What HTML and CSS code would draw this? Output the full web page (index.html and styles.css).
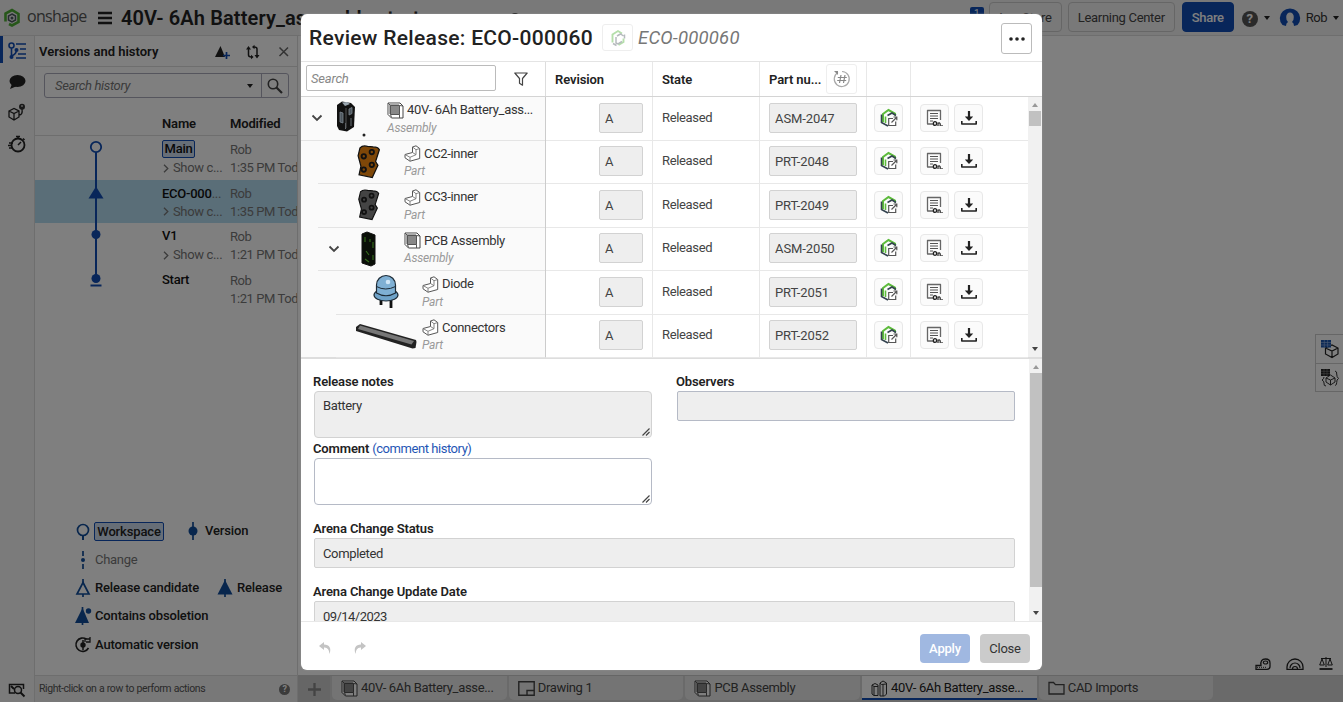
FILE: index.html
```html
<!DOCTYPE html>
<html lang="en">
<head>
<meta charset="utf-8">
<title>Review Release</title>
<link rel="stylesheet" href="styles.css">
</head>
<body>
<svg class="defs" width="0" height="0">
  <symbol id="asm" viewBox="0 0 17 17"><path d="M1 1h12l3 3v12H4.500L1 12.500z" fill="#fff" stroke="#444"/><path d="M1 1h11v11H1z" fill="#aaa"/><path d="M3.500 3.500h9v9h-9z" fill="#888" stroke="#555"/><path d="M12.500 3.500L16 4M3.500 12.500l1 3M12.500 12.500v3.500M1 1l2.500 2.500" stroke="#555" fill="none"/></symbol>
  <symbol id="part" viewBox="0 0 17 17"><path d="M8.500 2L12 .8l3.700 2.700v10L6 16.200 1 12.800V9.500l7.500-2z" fill="#fff" stroke="#555" stroke-linejoin="round"/><path d="M8.500 2L12 4.700l3.700-1.200M12 4.700v5L6 12.300 1 9.500M6 12.300v3.900M8.500 7.500l3.500 2.200" stroke="#777" stroke-width=".9" fill="none"/></symbol>
  <symbol id="open" viewBox="0 0 18 20"><path d="M3 14V6l5.500-4L15 5.500v2" fill="none" stroke="#5dbb3c" stroke-width="2"/><path d="M7.500 7.500L12 5l4 2.500M1.500 6.500v8L8 18" fill="none" stroke="#33434f" stroke-width="1.600"/><path d="M5.500 15V8.500" stroke="#5dbb3c" stroke-width="1.600"/><path d="M13 10.500H8.700v7h7v-4" fill="#fff" stroke="#555" stroke-width="1.200"/><path d="M11.500 14.500l5-5M13.500 9h3.300v3.300" fill="none" stroke="#555" stroke-width="1.200"/></symbol>
  <symbol id="doc" viewBox="0 0 18 18"><path d="M8 15H2.500V1.500h13V11" fill="none" stroke="#666" stroke-width="1.300" stroke-linejoin="round"/><path d="M5 4.500h8M5 7h8M5 9.500h8M5 12h3" stroke="#555"/><ellipse cx="10" cy="14.500" rx="1.600" ry="1.900" fill="none" stroke="#222" stroke-width="1.400"/><path d="M13 17v-3.500M13 14.300q2.200-1 2.200 1V17M17 16v1" stroke="#222" stroke-width="1.200" fill="none"/></symbol>
  <symbol id="down" viewBox="0 0 16 16"><path d="M8 1v8" stroke="#222" stroke-width="2.200"/><path d="M3.800 6.500h8.400L8 11z" fill="#222"/><path d="M.8 11v3h14.400v-3" fill="none" stroke="#222" stroke-width="1.600" stroke-linejoin="round"/></symbol>
  <symbol id="chev" viewBox="0 0 12 8"><path d="M1.500 1.500L6 6l4.500-4.500" fill="none" stroke="#444" stroke-width="1.800"/></symbol>
  <symbol id="more" viewBox="0 0 6 9"><path d="M1 .7L4.800 4.500 1 8.300" fill="none" stroke="#777" stroke-width="1.300"/></symbol>
  <symbol id="grip" viewBox="0 0 8 8"><path d="M.5 7.500l7-7M4 7.500L7.500 4" stroke="#444" stroke-width="1.200"/></symbol>
  <symbol id="plate" viewBox="0 0 26 36"><path d="M4 3q3-3 8-1.500L18 2q5 0 6.500 3l-4 12.500 2.500 4L17 34.500 3 31.500l2-9-3-11z" stroke="#111" stroke-width="1.300"/><g fill="none" stroke="#111" stroke-width="2"><circle cx="8" cy="12" r="2.300"/><circle cx="16.500" cy="7.500" r="2.300"/><circle cx="16.500" cy="21" r="2.300"/><circle cx="8" cy="26" r="2.300"/></g></symbol>
</svg>

<div class="app">
  <header class="topbar">
    <svg class="logo" width="18" height="20" viewBox="0 0 18 20"><path d="M2.500 13.500V5.500L9 2l6.500 4v8L9 17.500 6 16" fill="none" stroke="#4fae35" stroke-width="2.600"/><path d="M9 6l3.500 2v4L9 14l-3.500-2V8z" fill="none" stroke="#4d5a60" stroke-width="1.500"/><circle cx="9" cy="10" r="1.500" fill="#4d5a60"/></svg>
    <span class="brand">onshape</span>
    <svg class="burger" width="14" height="14" viewBox="0 0 14 14"><path d="M0 2h14M0 7h14M0 12h14" stroke="#222" stroke-width="2.400"/></svg>
    <span class="doc-title">40V- 6Ah Battery_assembly start</span>
    <svg class="peek-link" width="8" height="10" viewBox="0 0 8 10"><circle cx="4" cy="4" r="3" fill="none" stroke="#222" stroke-width="2"/></svg>
    <div class="peeks">
      <svg width="50" height="14" viewBox="0 0 50 14"><circle cx="5" cy="7" r="3" fill="#222"/><path d="M38 4q-4 4 0 8M46 4q4 4 0 8" fill="none" stroke="#222" stroke-width="2"/></svg>
      <span class="badge">1</span>
    </div>
    <span class="hbtn store">App Store</span>
    <span class="hbtn learn">Learning Center</span>
    <span class="hbtn share">Share</span>
    <span class="help">?</span>
    <i class="caret"></i>
    <svg class="avatar" width="22" height="20" viewBox="0 0 22 20"><path d="M3.500 17A10.200 9.800 0 1 1 18.500 17L15 18q0-3-2-4 2-2 1.800-5A3.800 4.500 0 0 0 7.200 9q-.2 3 1.800 5-2 1-2 4z" fill="#114db4"/></svg>
    <span class="user">Rob</span>
    <i class="caret last"></i>
  </header>

  <div class="workspace">
    <nav class="rail">
      <div class="rail-on"><svg width="18" height="18" viewBox="0 0 18 18"><g fill="none" stroke="#114db4" stroke-width="1.600"><circle cx="3.500" cy="3.500" r="2.500"/><path d="M3.500 6v10M3.500 14Q8.500 12 8.500 8"/><path d="M8 2h10M12 7h6M10 12h8M8 16h10"/></g><g fill="#114db4"><circle cx="3.500" cy="15" r="2"/><circle cx="8.500" cy="8" r="2"/></g></svg></div>
      <svg width="18" height="16" viewBox="0 0 18 16"><ellipse cx="9.500" cy="7" rx="8" ry="6" fill="#222"/><path d="M4 10l-2 5 7-3z" fill="#222"/></svg>
      <svg width="18" height="18" viewBox="0 0 18 18"><path d="M1 8l5-2.500L11 8v6l-5 3-5-3zM1 8l5 2.500L11 8M6 10.500V17M11 12q4 0 3-6" fill="none" stroke="#222" stroke-width="1.300"/><circle cx="14" cy="3.800" r="3" fill="#333"/><path d="M14 2v2" stroke="#fff"/></svg>
      <svg width="18" height="18" viewBox="0 0 18 18"><circle cx="10" cy="10" r="6.500" fill="none" stroke="#222" stroke-width="1.800"/><path d="M8 1.500h4M10 1.500V4M15 3.500l1.500 1.500M10 10l3-3M1 8h4M0 10.500h4M1 13h4" stroke="#222" stroke-width="1.500"/></svg>
      <svg class="rail-last" width="18" height="15" viewBox="0 0 18 15"><path d="M7 11H1.500V2.500h14V7" fill="none" stroke="#222" stroke-width="1.500"/><circle cx="10" cy="8" r="3.500" fill="#eee" stroke="#222" stroke-width="1.500"/><path d="M12.500 10.500l4 4M3 4l3 3" stroke="#222" stroke-width="2"/></svg>
    </nav>

    <aside class="panel">
      <div class="panel-head">
        <b>Versions and history</b>
        <svg width="70" height="16" viewBox="0 0 70 16"><path d="M0 13L5.500 2 10 13z" fill="#222"/><path d="M8 11.500h7M11.500 8v7" stroke="#114db4" stroke-width="1.700"/><g fill="none" stroke="#222" stroke-width="1.500"><path d="M33.500 4v7q0 2 3 2M39 3q3 0 3 2v8"/></g><path d="M31 5.500h5L33.500 2zM39.500 11h5L42 14.500zM36 10.800v4.400l2.600-2.200zM39.500.8v4.400L37 3z" fill="#222"/><path d="M64.500 3.500l8.500 8.500M73 3.500L64.500 12" stroke="#666" stroke-width="1.500"/></svg>
      </div>
      <div class="history-search"><i>Search history</i><em class="caret"></em><span class="mag"><svg width="16" height="16" viewBox="0 0 16 16"><circle cx="6" cy="6" r="4.700" fill="none" stroke="#444" stroke-width="1.600"/><path d="M9.500 9.500L15 15" stroke="#444" stroke-width="2.200"/></svg></span></div>
      <div class="hist-cols"><b>Name</b><b>Modified</b></div>
      <div class="history">
        <svg class="graph" width="24" height="152" viewBox="0 0 24 152"><path d="M12 15v130" stroke="#114db4" stroke-width="2"/><circle cx="12" cy="11" r="5.200" fill="#fff" stroke="#114db4" stroke-width="1.800"/><path d="M12 50.500l7.500 12h-15z" fill="#114db4"/><circle cx="12" cy="98.500" r="4.500" fill="#114db4"/><circle cx="12" cy="142.500" r="4.500" fill="#114db4"/><path d="M6.500 149.500h11" stroke="#114db4" stroke-width="2"/></svg>
        <div class="hrow"><div><b class="tagbox">Main</b><small><svg width="6" height="9"><use href="#more"/></svg>Show c...</small></div><div><span>Rob</span><small>1:35 PM Tod</small></div></div>
        <div class="hrow sel"><div><b>ECO-000<span class="dots">...</span></b><small><svg width="6" height="9"><use href="#more"/></svg>Show c...</small></div><div><span>Rob</span><small>1:35 PM Tod</small></div></div>
        <div class="hrow"><div><b>V1</b><small><svg width="6" height="9"><use href="#more"/></svg>Show c...</small></div><div><span>Rob</span><small>1:21 PM Tod</small></div></div>
        <div class="hrow"><div><b>Start</b></div><div><span>Rob</span><small>1:21 PM Tod</small></div></div>
      </div>
      <div class="legend">
        <div><svg width="16" height="18" viewBox="0 0 16 18"><circle cx="8" cy="8" r="5.500" fill="none" stroke="#114d9b" stroke-width="1.700"/><path d="M8 13.500V18" stroke="#114d9b" stroke-width="2"/></svg><span class="tagbox">Workspace</span><svg class="second" width="16" height="18" viewBox="0 0 16 18"><circle cx="8" cy="9" r="4.500" fill="#114d9b"/><path d="M8 0v18" stroke="#114d9b" stroke-width="1.700"/></svg><span>Version</span></div>
        <div><svg width="16" height="18" viewBox="0 0 16 18"><path d="M8 0v5M8 13v5" stroke="#114d9b" stroke-width="1.700"/><circle cx="8" cy="9" r="2" fill="#114d9b"/></svg><span class="mute">Change</span></div>
        <div><svg width="16" height="18" viewBox="0 0 16 18"><path d="M8 3.500L14 15H2z" fill="none" stroke="#114d9b" stroke-width="1.700"/><path d="M8 0v4M8 15v3" stroke="#114d9b" stroke-width="1.700"/></svg><span class="rc">Release candidate</span><svg class="third" width="16" height="18" viewBox="0 0 16 18"><path d="M8 1l7.500 14.500H.5z" fill="#114d9b"/><path d="M8 0v18" stroke="#114d9b" stroke-width="1.700"/></svg><span>Release</span></div>
        <div><svg width="16" height="18" viewBox="0 0 16 18"><path d="M7.500 1L14 16H0z" fill="#114d9b"/><path d="M7.500 0v18" stroke="#114d9b" stroke-width="1.700"/><circle cx="13.500" cy="4" r="2.700" fill="#114d9b"/></svg><span>Contains obsoletion</span></div>
        <div><svg width="16" height="18" viewBox="0 0 16 18"><path d="M11.500 3.200A6.700 6.700 0 1 0 13.500 12" fill="none" stroke="#222" stroke-width="1.600"/><path d="M10 6V3h5M15 1v5h-4" fill="none" stroke="#222" stroke-width="1.300"/><circle cx="8" cy="9" r="2.700" fill="#222"/><path d="M8 4v10" stroke="#222" stroke-width="1.500"/></svg><span>Automatic version</span></div>
      </div>
      <div class="panel-foot"><span>Right-click on a row to perform actions</span><span class="help small">?</span></div>
    </aside>

    <main class="canvas">
      <div class="side-tools">
        <span><svg width="18" height="18" viewBox="0 0 18 18"><path d="M4.500 8l6.500-3 6 3v6l-6 3.500-6.500-3.500zM4.500 8l6.500 3 6-3M11 11v6.500" fill="none" stroke="#222" stroke-width="1.200"/><path d="M0 0h10v7.500H0z" fill="#1b55ad"/><path d="M3.300 0v7.500M6.600 0v7.500M0 2.500h10M0 5h10" stroke="#9ab6e0" stroke-width=".6"/></svg></span>
        <span><svg width="18" height="18" viewBox="0 0 18 18"><path d="M5 9l4.500-3L14 9v4l-4.500 3L5 13zM5 9l4.500 2L14 9M9.500 11v5M5 17q-2.500 0-2-3 0-2-2-3 2-1 2-3M14 2q2.200.5 1.700 3 0 3 1.800 4.500-2 1-1.800 4 .3 2.500-1.700 3" fill="none" stroke="#333"/><path d="M0 0h9v7H0z" fill="#222"/><path d="M3 0v7M6 0v7M0 2.300h9M0 4.700h9" stroke="#888" stroke-width=".6"/></svg></span>
      </div>
      <div class="measure">
        <svg width="16" height="12" viewBox="0 0 16 12"><path d="M1 11.300V7.500h5Q5 1 10.500 1 15 1 15 5v3.500q0 2.800-3 2.800z" fill="none" stroke="#222" stroke-width="1.300"/><ellipse cx="10.500" cy="4.500" rx="2.200" ry="1.500" fill="none" stroke="#222" stroke-width="1.200"/><path d="M2 9.300h10" stroke="#222" stroke-dasharray="1 1"/></svg>
        <svg width="18" height="12" viewBox="0 0 18 12"><path d="M1 11.300V9a8 8 0 0 1 16 0v2.300z" fill="none" stroke="#222" stroke-width="1.300"/><path d="M4 10a5 5 0 0 1 10 0M6.500 11a2.500 2.500 0 0 1 5 0" fill="none" stroke="#222" stroke-width="1.200"/></svg>
        <svg width="14" height="13" viewBox="0 0 14 13"><path d="M2 1.500h10M7 0v10M3 2L.7 8h4.600zM11 2L8.700 8h4.600z" fill="none" stroke="#222"/><path d="M.5 12h13" stroke="#222" stroke-width="1.800"/></svg>
      </div>
      <div class="tabs">
        <span class="plus"><svg width="13" height="13" viewBox="0 0 13 13"><path d="M0 6.500h13M6.500 0v13" stroke="#888" stroke-width="2.300"/></svg></span>
        <span class="tab"><svg width="17" height="17"><use href="#asm"/></svg><span>40V- 6Ah Battery_asse...</span></span>
        <span class="tab"><svg width="17" height="17" viewBox="0 0 17 17"><path d="M.8 1.800h15.400v13.400H.8zM9 15v-4.500h7" fill="none" stroke="#444" stroke-width="1.400"/></svg><span>Drawing 1</span></span>
        <span class="tab"><svg width="17" height="17"><use href="#asm"/></svg><span>PCB Assembly</span></span>
        <span class="tab active"><svg width="17" height="17" viewBox="0 0 17 17"><path d="M1 5l3-1.500L7 5v10.500H3L1 14zM1 5l2 1.500h4M3 6.500v9M9 3l3-2 3.500 2v11l-2 2H9zM9 3l1.500 1.500L15 4M12 4.500V16" fill="none" stroke="#333"/></svg><span>40V- 6Ah Battery_asse...</span></span>
        <span class="tab"><svg width="17" height="17" viewBox="0 0 17 17"><path d="M1 14V2.500h4.500l2 2.200H16V14z" fill="none" stroke="#444" stroke-width="1.300"/></svg><span>CAD Imports</span></span>
      </div>
    </main>
  </div>
</div>
<div class="shade"></div>

<section class="modal">
  <div class="modal-head">
    <h1>Review Release: ECO-000060</h1>
    <span class="arena"><svg width="18" height="18" viewBox="0 0 18 18"><path d="M3.500 13.500V5.500L9 2l4 2.500M9.500 16l5-3V9.500" fill="none" stroke="#b5dfab" stroke-width="1.900"/><path d="M15.500 5.500v4M8 7l3.500-2 3 2M4 14.500l3.500 2M7 8v6l2 1 4-2.500" fill="none" stroke="#b6bbbe" stroke-width="1.500"/></svg></span>
    <i>ECO-000060</i>
    <span class="menu"><svg width="16" height="4" viewBox="0 0 16 4"><g fill="#222"><circle cx="2" cy="2" r="1.800"/><circle cx="8" cy="2" r="1.800"/><circle cx="14" cy="2" r="1.800"/></g></svg></span>
  </div>
  <div class="cols">
    <div class="find"><span class="find-box"><i>Search</i></span><svg width="14" height="14" viewBox="0 0 14 14"><path d="M.8 1h12.400L8.500 6.500v6.700l-3-2V6.500z" fill="none" stroke="#444" stroke-width="1.200" stroke-linejoin="round"/></svg></div>
    <div class="c"><b>Revision</b></div>
    <div class="c"><b>State</b></div>
    <div class="c"><b>Part nu...</b><span class="hash"><svg width="18" height="18" viewBox="0 0 18 18"><path d="M5 2.500A7.500 7.500 0 1 0 9 1.500" fill="none" stroke="#aaa" stroke-width="1.200"/><path d="M1 1h4v4z" fill="#888"/><path d="M8 5L6.500 13M12 5l-1.500 8M4.800 7.500h9M4.200 10.500h9" fill="none" stroke="#888" stroke-width="1.200"/></svg></span></div>
    <div class="c"></div>
    <div></div>
  </div>
  <div class="grid-area">
    <div class="tree">
      <div class="trow l0"><svg class="chev" width="12" height="8"><use href="#chev"/></svg><svg class="thumb" width="64" height="40" viewBox="0 0 64 40"><path d="M14 7l5-3.500 9 1.500 4 4-1 20-7 4.500-8-1.500-2-4z" fill="#111"/><path d="M19 4.500l5-.5 3 2-5 2z" fill="#9aa6b0"/><path d="M17 14l3 1v10l-3-1zM26 11l3-1.500v6L26 17zM22.500 25v6M28 20v8" fill="#4d565e" stroke="#7d8890" stroke-width=".8"/><path d="M23 10v20" stroke="#555"/><circle cx="41" cy="37" r="1.500" fill="#222"/></svg><div class="nm"><span><svg width="17" height="17"><use href="#asm"/></svg>40V- 6Ah Battery_ass...</span><i>Assembly</i></div></div>
      <div class="trow l1"><span></span><svg class="thumb" width="64" height="40" viewBox="0 0 64 40"><use href="#plate" x="16" y="3" width="25" height="34" fill="#7e4708"/></svg><div class="nm"><span><svg width="17" height="17"><use href="#part"/></svg>CC2-inner</span><i>Part</i></div></div>
      <div class="trow l1"><span></span><svg class="thumb" width="64" height="40" viewBox="0 0 64 40"><use href="#plate" x="17" y="3" width="23" height="34" fill="#444"/></svg><div class="nm"><span><svg width="17" height="17"><use href="#part"/></svg>CC3-inner</span><i>Part</i></div></div>
      <div class="trow l1"><svg class="chev" width="12" height="8"><use href="#chev"/></svg><svg class="thumb" width="64" height="40" viewBox="0 0 64 40"><path d="M22 5l5-2 8 3v29l-4 2-9-3z" fill="#0a0f08" stroke="#111"/><path d="M25 8v5M30 10v3M33 13v6M26 22l3 4M33 26v5M25 30l4 3" stroke="#356f1c" stroke-width="1.100"/></svg><div class="nm"><span><svg width="17" height="17"><use href="#asm"/></svg>PCB Assembly</span><i>Assembly</i></div></div>
      <div class="trow l2"><span></span><svg class="thumb" width="64" height="40" viewBox="0 0 64 40"><path d="M23 27v6M33 28v8" stroke="#111" stroke-width="2.800"/><ellipse cx="28" cy="23" rx="12" ry="6" fill="#6fa3c9" stroke="#1d2b36" stroke-width="1.200"/><path d="M18.500 21V13a9.500 9.500 0 0 1 19 0v8q-9.500 5.500-19 0z" fill="#7fb0d4" stroke="#1d2b36" stroke-width="1.200"/><path d="M18.500 14.500q9 5 19 0" fill="none" stroke="#1d2b36"/><circle cx="30" cy="10" r="2.300" fill="#cfe6f7"/></svg><div class="nm"><span><svg width="17" height="17"><use href="#part"/></svg>Diode</span><i>Part</i></div></div>
      <div class="trow l2"><span></span><svg class="thumb" width="64" height="40" viewBox="0 0 64 40"><path d="M-2 11l4-3 56 16 .5 2-1 6-3 .5L-2 15z" fill="#222"/><path d="M2 9.500l54 15.500-2.500 3.500L0 13z" fill="#777"/></svg><div class="nm"><span><svg width="17" height="17"><use href="#part"/></svg>Connectors</span><i>Part</i></div></div>
    </div>
    <div class="props">
      <div class="prow"><div class="c rev"><span class="field">A</span></div><div class="c">Released</div><div class="c"><span class="field pn">ASM-2047</span></div><div class="c ic"><span class="ib"><svg width="18" height="20"><use href="#open"/></svg></span></div><div class="acts"><span class="ib"><svg width="18" height="18"><use href="#doc"/></svg></span><span class="ib"><svg width="16" height="16"><use href="#down"/></svg></span></div></div>
      <div class="prow"><div class="c rev"><span class="field">A</span></div><div class="c">Released</div><div class="c"><span class="field pn">PRT-2048</span></div><div class="c ic"><span class="ib"><svg width="18" height="20"><use href="#open"/></svg></span></div><div class="acts"><span class="ib"><svg width="18" height="18"><use href="#doc"/></svg></span><span class="ib"><svg width="16" height="16"><use href="#down"/></svg></span></div></div>
      <div class="prow"><div class="c rev"><span class="field">A</span></div><div class="c">Released</div><div class="c"><span class="field pn">PRT-2049</span></div><div class="c ic"><span class="ib"><svg width="18" height="20"><use href="#open"/></svg></span></div><div class="acts"><span class="ib"><svg width="18" height="18"><use href="#doc"/></svg></span><span class="ib"><svg width="16" height="16"><use href="#down"/></svg></span></div></div>
      <div class="prow"><div class="c rev"><span class="field">A</span></div><div class="c">Released</div><div class="c"><span class="field pn">ASM-2050</span></div><div class="c ic"><span class="ib"><svg width="18" height="20"><use href="#open"/></svg></span></div><div class="acts"><span class="ib"><svg width="18" height="18"><use href="#doc"/></svg></span><span class="ib"><svg width="16" height="16"><use href="#down"/></svg></span></div></div>
      <div class="prow"><div class="c rev"><span class="field">A</span></div><div class="c">Released</div><div class="c"><span class="field pn">PRT-2051</span></div><div class="c ic"><span class="ib"><svg width="18" height="20"><use href="#open"/></svg></span></div><div class="acts"><span class="ib"><svg width="18" height="18"><use href="#doc"/></svg></span><span class="ib"><svg width="16" height="16"><use href="#down"/></svg></span></div></div>
      <div class="prow"><div class="c rev"><span class="field">A</span></div><div class="c">Released</div><div class="c"><span class="field pn">PRT-2052</span></div><div class="c ic"><span class="ib"><svg width="18" height="20"><use href="#open"/></svg></span></div><div class="acts"><span class="ib"><svg width="18" height="18"><use href="#doc"/></svg></span><span class="ib"><svg width="16" height="16"><use href="#down"/></svg></span></div></div>
    </div>
    <div class="scroll"><i class="up"></i><b class="short"></b><i class="dn"></i></div>
  </div>
  <div class="form-area">
    <form class="form">
      <div class="two">
        <div>
          <label>Release notes</label>
          <div class="area ro">Battery<svg class="grip" width="8" height="8"><use href="#grip"/></svg></div>
          <label>Comment <a>(comment history)</a></label>
          <div class="area"><svg class="grip" width="8" height="8"><use href="#grip"/></svg></div>
        </div>
        <div>
          <label>Observers</label>
          <div class="line obs"></div>
        </div>
      </div>
      <label class="gap1">Arena Change Status</label>
      <div class="line">Completed</div>
      <label class="gap2">Arena Change Update Date</label>
      <div class="line date">09/14/2023</div>
    </form>
    <div class="scroll"><i class="up"></i><b class="long"></b><i class="dn"></i></div>
  </div>
  <div class="modal-foot">
    <svg width="52" height="14" viewBox="0 0 52 14"><path d="M6 1L1 5l5 4V6.500q5-.5 5.500 6.500 3-9-5.500-9.500z" fill="#c4c4c4"/><path d="M43 1l5 4-5 4V6.500q-5-.5-5.500 6.500-3-9 5.500-9.500z" fill="#c4c4c4"/></svg>
    <span class="btn apply">Apply</span><span class="btn close">Close</span>
  </div>
</section>
</body>
</html>
```
FILE: styles.css
```css
* { box-sizing: border-box; }
body { margin: 0; width: 1343px; height: 702px; overflow: hidden; font: 13px/16px Roboto, "Liberation Sans", sans-serif; color: #333; background: #fff; }
svg { display: block; flex: none; overflow: visible; }
.defs { position: absolute; }
b, label { font-weight: 600; }
.app { height: 702px; display: flex; flex-direction: column; }
.shade { position: absolute; inset: 0; background: rgba(0, 0, 0, .5); }

/* top bar */
.topbar { height: 36px; flex: none; display: flex; align-items: center; padding-left: 3px; background: #f2f2f2; border-bottom: 1px solid #ddd; white-space: nowrap; }
.brand { font: 16px/20px "Open Sans", sans-serif; letter-spacing: -.7px; color: #555; margin-left: 6px; width: 65px; margin-top: -3px; }
.burger { margin-left: 6px; }
.doc-title { font-size: 20px; font-weight: 600; letter-spacing: .12px; color: #222; margin-left: 9px; width: 300px; }
.peek-link { margin-left: 90px; }
.peeks { display: flex; align-items: flex-start; margin-left: auto; }
.peeks svg { margin-top: 7px; }
.badge { background: #114db4; color: #fff; width: 14px; height: 14px; font-size: 10px; line-height: 13px; text-align: center; border-radius: 2px; margin: 0 5px 0 21px; }
.hbtn { height: 30px; border: 1px solid #ccc; border-radius: 4px; line-height: 29px; text-align: center; color: #444; margin-bottom: 2px; }
.store { width: 73px; text-align: right; padding-right: 9px; letter-spacing: -.2px; }
.learn { width: 107px; margin-left: 6px; letter-spacing: -.3px; }
.share { width: 52px; margin-left: 7px; background: #114db4; border-color: #114db4; color: #fff; font-weight: 500; letter-spacing: -.3px; }
.help { width: 16px; height: 16px; border-radius: 50%; background: #555; color: #fff; font-weight: 700; font-size: 13px; line-height: 16px; text-align: center; margin: 3px 6px 0 8px; flex: none; }
.caret { border: 3.500px solid transparent; border-top: 4px solid #222; border-bottom: 0; flex: none; }
.avatar { margin-left: 9px; }
.user { margin-left: 5px; color: #333; letter-spacing: -.5px; }
.last { margin: 0 4px 0 6px; }

.workspace { flex: 1; display: flex; min-height: 0; }
.rail { width: 35px; background: #f6f6f6; border-right: 1px solid #ddd; display: flex; flex-direction: column; align-items: center; gap: 13.500px; padding-bottom: 5px; }
.rail-on { width: 35px; height: 27px; border-left: 3px solid #114db4; padding: 6px 0 0 5px; margin-bottom: -3px; }
.rail-last { margin-top: auto; }

.panel { width: 263px; border-right: 1px solid #ddd; display: flex; flex-direction: column; overflow: hidden; }
.panel-head { height: 31px; display: flex; align-items: center; justify-content: space-between; padding: 2px 12px 0 4px; border-bottom: 1px solid #ddd; color: #222; }
.history-search { height: 25px; margin: 6px 8px 0 9px; border: 1px solid #aab; border-radius: 3px; display: flex; align-items: center; padding-left: 10px; color: #777; letter-spacing: -.35px; }
.history-search .caret { margin-left: auto; margin-right: 8px; }
.mag { height: 23px; width: 27px; border-left: 1px solid #aab; display: grid; place-items: center; }
.hist-cols { height: 38px; padding: 18px 0 0 127px; border-bottom: 1px solid #ddd; display: grid; grid-template-columns: 68px 1fr; color: #222; letter-spacing: -.15px; }
.history { position: relative; height: 176px; }
.graph { position: absolute; left: 49px; top: 0; }
.hrow { height: 43.700px; display: grid; grid-template-columns: 68px 67px; padding: 5px 0 0 127px; color: #777; white-space: nowrap; }
.hrow b, .hrow span { display: block; height: 17px; line-height: 18px; }
.hrow > div > span { letter-spacing: -.4px; }
.hrow b { font-weight: 500; color: #111; line-height: 16px; letter-spacing: -.25px; }
.hrow b .dots { display: inline; color: #777; font-weight: 400; letter-spacing: -.3px; }
.hrow small { display: flex; align-items: center; gap: 4px; font-size: 13px; height: 20px; padding-left: 1px; letter-spacing: -.35px; }
.hrow div:last-child small { padding: 0; letter-spacing: -.4px; }
.sel { background: #b4dcf0; }
.hrow .tagbox, .tagbox { border: 1px solid #114db4; border-radius: 2px; background: #cfdcef; }
.hrow .tagbox { width: 33px; text-align: center; height: 18px; line-height: 16px; margin: -1px 0 0; }
.legend { margin-top: auto; padding: 0 0 16px 40px; font-weight: 500; color: #222; font-size: 13px; letter-spacing: -.15px; }
.legend div { height: 28.400px; display: flex; align-items: center; gap: 4px; white-space: nowrap; }
.legend .tagbox { text-align: center; line-height: 17px; margin-left: -1px; width: 70px; }
.legend .second { margin-left: 17px; }
.legend .third { margin-left: auto; }
.legend div:nth-child(3) { padding-right: 15px; }
.legend .mute { color: #777; font-weight: 400; letter-spacing: -.3px; }
.panel-foot { height: 27px; flex: none; border-top: 1px solid #ddd; background: #f0f0f0; display: flex; align-items: center; justify-content: space-between; padding: 0 7px 0 4px; font-size: 10.500px; letter-spacing: -.42px; word-spacing: .4px; color: #555; }
.help.small { width: 11px; height: 11px; line-height: 11px; font-size: 9px; margin: 0; background: #777; }

.canvas { flex: 1; min-width: 0; display: flex; flex-direction: column; }
.side-tools { margin: 298px 0 0 auto; width: 28px; border: 1px solid #ccc; border-right: 0; }
.side-tools span { height: 28px; display: grid; place-items: center; }
.side-tools span + span { border-top: 1px solid #ccc; }
.measure { margin-top: auto; display: flex; justify-content: flex-end; align-items: center; gap: 15px; padding: 0 10px 5px; }
.tabs { height: 27px; background: #d4d4d4; display: flex; gap: 2px; flex: none; border-top: 1px solid #ccc; }
.plus { width: 32px; display: grid; place-items: center; background: #ccc; }
.tab { width: 174.700px; height: 24px; background: #e8e8e8; border-radius: 0 0 5px 5px; display: flex; align-items: center; gap: 3px; padding-left: 9px; color: #444; white-space: nowrap; letter-spacing: -.33px; }
.tab.active { background: #fff; border-bottom: 2px solid #114db4; border-radius: 0; color: #222; padding-top: 2px; }

/* dialog */
.modal { position: absolute; left: 301px; top: 14px; width: 741px; height: 656px; background: #fff; border-radius: 6px; display: flex; flex-direction: column; overflow: hidden; box-shadow: 0 0 2px #999; }
.modal-head { height: 48px; flex: none; display: flex; align-items: center; padding: 0 10px 0 8px; border-bottom: 1px solid #e4e4e4; }
h1 { margin: 0; font-size: 21px; font-weight: 500; line-height: 26px; letter-spacing: .3px; color: #222; width: 284px; white-space: nowrap; }
.arena { width: 31px; height: 27px; margin: 0 5px 0 9px; border: 1px solid #eee; border-radius: 3px; display: grid; place-items: center; }
.modal-head i { font-size: 18.500px; letter-spacing: .2px; color: #777; padding-top: 1px; }
.menu { width: 31px; height: 31px; border: 1px solid #bbb; border-radius: 3px; margin: 2px 0 0 auto; display: grid; place-items: center; }
.cols { height: 35px; flex: none; display: grid; grid-template-columns: 245px 107px 107px 107px 43.500px 1fr; border-bottom: 1px solid #d4d4d4; color: #222; }
.cols b { letter-spacing: -.1px; padding-top: 1px; }
.find { display: flex; align-items: center; gap: 18px; padding-left: 5px; border-right: 1px solid #ddd; }
.find-box { width: 190px; height: 26px; border: 1px solid #bbb; border-radius: 2px; padding: 5px 4px 0; color: #888; margin-top: -2px; letter-spacing: -.2px; }
.c { border-right: 1px solid #e8e8e8; display: flex; align-items: center; padding-left: 9px; }
.hash { width: 31px; height: 30px; border: 1px solid #eee; border-radius: 3px; display: grid; place-items: center; margin-left: 5px; }
.grid-area { height: 262px; flex: none; display: flex; border-bottom: 2px solid #ddd; }
.tree { width: 245px; background: #fafafa; border-right: 1px solid #ccc; }
.trow { height: 43.500px; border-bottom: 1px solid #e4e4e4; display: grid; grid-template-columns: 22px 64px 1fr; align-items: center; }
.l1 { margin-left: 17px; }
.l2 { margin-left: 35px; }
.chev { margin-left: 10px; }
.nm { display: flex; flex-direction: column; white-space: nowrap; color: #333; padding-top: 1px; }
.nm span { display: flex; align-items: center; gap: 3px; height: 19px; letter-spacing: -.33px; }
.nm i { color: #999; font-size: 12px; height: 17px; line-height: 16px; letter-spacing: -.2px; }
.props { flex: 1; }
.prow { height: 43.500px; border-bottom: 1px solid #e8e8e8; display: grid; grid-template-columns: 107px 107px 107px 43.500px 1fr; color: #444; letter-spacing: -.35px; }
.prow .c, .acts { padding-bottom: 1px; }
.rev { padding-left: 53px; }
.field { width: 44px; height: 30px; border: 1px solid #d2d2d2; border-radius: 2px; background: #eee; padding: 7px 5px; line-height: 16px; letter-spacing: -.1px; }
.field.pn { width: 88px; }
.ic { padding-left: 7px; }
.ib { width: 29px; height: 28px; border: 1px solid #e8e8e8; border-radius: 4px; background: #fbfbfb; display: grid; place-items: center; }
.acts { display: flex; align-items: center; gap: 5.500px; padding-left: 9px; }
.scroll { width: 14px; background: #f1f1f1; display: flex; flex-direction: column; align-items: center; flex: none; padding: 6px 0; }
.scroll i { border: 3.500px solid transparent; }
.scroll .up { border-bottom: 4px solid #999; border-top: 0; }
.scroll .dn { border-top: 4px solid #444; border-bottom: 0; margin-top: auto; }
.scroll b { width: 12px; background: #c1c1c1; margin-top: 4px; }
.short { height: 15px; }
.long { height: 214px; }
.form-area { flex: 1; min-height: 0; overflow: hidden; display: flex; border-bottom: 1px solid #e8e8e8; }
.form { flex: 1; padding: 15px 13.500px 0 13px; letter-spacing: -.35px; }
.two { display: grid; grid-template-columns: 337.500px 338px; gap: 25.500px; }
label { display: block; height: 17px; line-height: 16px; color: #222; margin-left: -1px; letter-spacing: -.13px; }
label a { color: #1f56b5; font-weight: 400; letter-spacing: -.45px; }
.area { height: 47px; border: 1px solid #b5bac6; border-radius: 4px; padding: 6px 8px; position: relative; margin-bottom: 3px; }
.ro, .line { background: #eee; border: 1px solid #d2d2d2; }
.grip { position: absolute; right: 1px; bottom: 1px; }
.line { height: 30px; border-radius: 2px; padding: 7px 8px; }
.obs { border-color: #b5bac6; }
.date { letter-spacing: -.55px; }
.gap1 { margin-top: 13px; }
.gap2 { margin-top: 16px; }
.modal-foot { height: 48px; flex: none; display: flex; align-items: center; padding: 4px 12px 0 17px; }
.btn { width: 50px; height: 29px; border-radius: 4px; line-height: 30px; text-align: center; letter-spacing: -.2px; }
.apply { margin-left: auto; background: #a0b8e1; color: #fff; font-weight: 500; }
.close { margin-left: 10px; background: #cbcbcb; }
```
